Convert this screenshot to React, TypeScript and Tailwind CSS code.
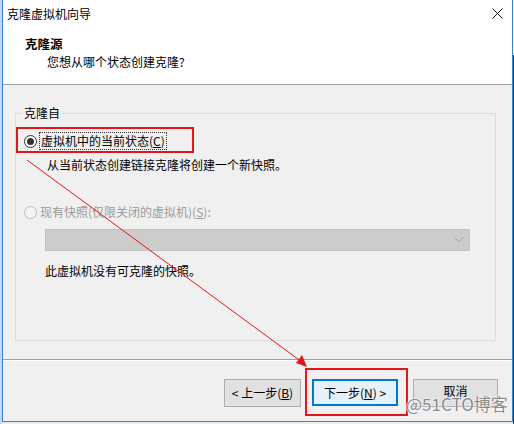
import React from "react";

const font = { fontFamily: '"Noto Sans CJK SC", "Noto Sans", sans-serif' };

export default function App() {
  return (
    <div
      className="relative flex w-[514px] h-[424px] overflow-hidden bg-[#e9eef5] text-[12px] leading-[16px] text-black"
      style={font}
    >
      {/* left desktop strip */}
      <div className="w-[2px] h-full bg-[#c9d6ea]" />
      {/* window */}
      <div className="flex flex-col w-[511px] h-[422px] border-l border-r border-b border-[#2f86d4] bg-[#f0f0f0]">
        {/* white top */}
        <div className="flex flex-col h-[85px] bg-white border-b border-[#a0a0a0]">
          <div className="flex items-center justify-between h-[27px] pl-[4px] pr-[9px]">
            <span className="text-[12px]">克隆虚拟机向导</span>
            <svg width="11" height="11" viewBox="0 0 11 11">
              <path d="M0.5 0.5 L10.5 10.5 M10.5 0.5 L0.5 10.5" stroke="#111" strokeWidth="1" />
            </svg>
          </div>
          <div className="pl-[22px] mt-[9px] font-bold text-[12.5px]">克隆源</div>
          <div className="pl-[44px] mt-[2px]">您想从哪个状态创建克隆?</div>
        </div>

        {/* body */}
        <div className="flex flex-col">
          <div className="relative ml-[12px] mt-[28px] w-[481px] h-[228px] border border-[#dcdcdc]">
            <span className="absolute left-[6px] top-[-9px] px-[2px] bg-[#f0f0f0] leading-[16px]">克隆自</span>

            <div className="flex items-center ml-[8px] mt-[18px] h-[18px]">
              <div className="flex items-center justify-center w-[13px] h-[13px] rounded-full border border-[#333] bg-white">
                <div className="w-[7px] h-[7px] rounded-full bg-[#333]" />
              </div>
              <span className="ml-[2px] px-[1px] border border-dotted border-[#333] leading-[16px]">
                虚拟机中的当前状态(<span className="underline">C</span>)
              </span>
            </div>
            <div className="ml-[31px] mt-[7px]">从当前状态创建链接克隆将创建一个新快照。</div>

            <div className="flex items-center ml-[8px] mt-[30px] h-[18px]">
              <div className="w-[13px] h-[13px] rounded-full border border-[#bcbcbc] bg-[#f4f4f4]" />
              <span className="ml-[3px] text-[#9a9a9a]">
                现有快照(仅限关闭的虚拟机)(<span className="underline">S</span>):
              </span>
            </div>
            <div className="flex items-center justify-end ml-[29px] mt-[8px] w-[425px] h-[22px] bg-[#cccccc] border border-[#c4c4c4] pr-[5px]">
              <svg width="10" height="6" viewBox="0 0 10 6">
                <path d="M0.5 0.5 L5 5 L9.5 0.5" stroke="#a8a8a8" fill="none" strokeWidth="1" />
              </svg>
            </div>
            <div className="ml-[29px] mt-[12px]">此虚拟机没有可克隆的快照。</div>
          </div>

          <div className="mt-[18px] h-[2px] border-t border-[#a0a0a0] border-b border-b-white" />

          <div className="flex mt-[18px] pl-[221px]">
            <div className="flex items-center justify-center w-[77px] h-[28px] bg-[#e1e1e1] border border-[#adadad]">
              &lt; 上一步(<span className="underline">B</span>)
            </div>
            <div className="flex items-center justify-center ml-[11px] w-[86px] h-[27px] bg-[#e5f1fb] border-2 border-[#0078d7]">
              下一步(<span className="underline">N</span>) &gt;
            </div>
            <div className="flex items-start justify-center pt-[3px] ml-[15px] w-[85px] h-[28px] bg-[#e1e1e1] border border-[#adadad]">
              取消
            </div>
          </div>
        </div>
      </div>
      {/* right desktop strip */}
      <div className="flex flex-col w-[1px] h-full">
        <div className="h-[55px] bg-white" />
        <div className="flex-1 bg-[#3a3a3a]" />
      </div>

      {/* annotations */}
      <div className="absolute left-[16px] top-[127px] w-[178px] h-[26px] border-2 border-[#e5141b]" />
      <div className="absolute left-[305px] top-[368px] w-[103px] h-[48px] border-2 border-[#e5141b]" />
      <svg className="absolute left-0 top-0 pointer-events-none" width="514" height="424">
        <line x1="27" y1="160" x2="302" y2="362" stroke="#e5141b" strokeWidth="1" />
        <polygon points="307,367 296,363 302,355" fill="#e5141b" />
      </svg>
      <div className="absolute left-[406px] top-[394px] text-[17px] leading-[20px] text-[#8a8a8a] [text-shadow:0_0_2px_#fff,0_0_2px_#fff]">
        @51CTO博客
      </div>
    </div>
  );
}
